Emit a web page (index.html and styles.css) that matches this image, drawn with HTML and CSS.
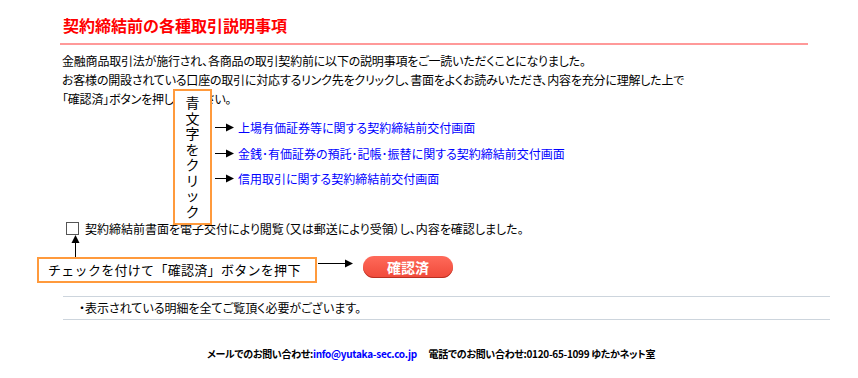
FILE: index.html
```html
<!DOCTYPE html>
<html lang="ja">
<head>
<meta charset="utf-8">
<title>契約締結前の各種取引説明事項</title>
<link rel="stylesheet" href="styles.css">
</head>
<body>
<div class="page">
  <div class="head">
    <h1 class="title">契約締結前の各種取引説明事項</h1>
  </div>

  <div class="content">
    <div class="note"><span class="note-text">青文字をクリック</span></div>
    <p class="intro">金融商品取引法が施行され、各商品の取引契約前に以下の説明事項をご一読いただくことになりました。<br>お客様の開設されている口座の取引に対応するリンク先をクリックし、書面をよくお読みいただき、内容を充分に理解した上で<br>「確認済」ボタンを押してください。</p>

    <ul class="links">
      <li><svg class="arr" width="19" height="9" viewBox="0 0 19 9"><line x1="0" y1="4.5" x2="12" y2="4.5" stroke="#000" stroke-width="1"/><polygon points="11,0.5 19,4.5 11,8.5" fill="#000"/></svg><a href="#">上場有価証券等に関する契約締結前交付画面</a></li>
      <li><svg class="arr" width="19" height="9" viewBox="0 0 19 9"><line x1="0" y1="4.5" x2="12" y2="4.5" stroke="#000" stroke-width="1"/><polygon points="11,0.5 19,4.5 11,8.5" fill="#000"/></svg><a href="#">金銭･有価証券の預託･記帳･振替に関する契約締結前交付画面</a></li>
      <li><svg class="arr" width="19" height="9" viewBox="0 0 19 9"><line x1="0" y1="4.5" x2="12" y2="4.5" stroke="#000" stroke-width="1"/><polygon points="11,0.5 19,4.5 11,8.5" fill="#000"/></svg><a href="#">信用取引に関する契約締結前交付画面</a></li>
    </ul>

    <label class="confirm"><span class="box"></span>契約締結前書面を電子交付により閲覧（又は郵送により受領）し、内容を確認しました。</label>

    <div class="action">
      <div class="instr">
        <svg class="uparr" width="9" height="22" viewBox="0 0 9 22"><line x1="4.5" y1="6" x2="4.5" y2="22" stroke="#000" stroke-width="1"/><polygon points="0.5,8 4.5,0 8.5,8" fill="#000"/></svg>
        チェックを付けて「確認済」ボタンを押下
      </div>
      <svg class="rarr" width="36" height="9" viewBox="0 0 36 9"><line x1="0" y1="4.5" x2="28" y2="4.5" stroke="#000" stroke-width="1"/><polygon points="27,0.5 35,4.5 27,8.5" fill="#000"/></svg>
      <button class="btn" type="button">確認済</button>
    </div>

    <div class="notice">・表示されている明細を全てご覧頂く必要がございます。</div>
  </div>

  <p class="footer">メールでのお問い合わせ:<a href="#">info@yutaka-sec.co.jp</a>　 電話でのお問い合わせ:0120-65-1099 ゆたかネット室</p>
</div>
</body>
</html>
```

FILE: styles.css
```css
html, body {
  margin: 0;
  padding: 0;
  background: #fff;
}
body {
  font-family: "Noto Sans CJK JP", "Noto Sans", sans-serif;
  color: #000;
  font-size: 12px;
  font-feature-settings: "palt";
}
.page {
  width: 858px;
  padding-top: 16px;
}
.head {
  margin-left: 60px;
  width: 748px;
  border-bottom: 2px solid #ff9999;
  padding-bottom: 9px;
}
.title {
  margin: 0 0 0 3px;
  font-size: 16px;
  line-height: 18px;
  font-weight: bold;
  color: #ff0000;
  font-feature-settings: normal;
}
.content {
  position: relative;
  padding-top: 6px;
}
.intro {
  margin: 0 0 0 62px;
  line-height: 19px;
  letter-spacing: -0.2px;
}
.note {
  position: absolute;
  left: 173px;
  top: 44px;
  width: 35px;
  height: 132px;
  border: 2px solid #ff9a3c;
  background: #fff;
  display: flex;
  align-items: center;
  justify-content: center;
}
.note-text {
  display: block;
  width: 15px;
  font-size: 14px;
  line-height: 15.5px;
  text-align: center;
  word-break: break-all;
  line-break: anywhere;
  font-feature-settings: normal;
}
.links {
  list-style: none;
  margin: 7px 0 0 215px;
  padding: 0;
}
.links li {
  display: flex;
  align-items: center;
  height: 25.5px;
}
.arr {
  margin-right: 4px;
  flex: none;
}
.links a {
  color: #0000ff;
  text-decoration: none;
}
.confirm {
  display: flex;
  align-items: center;
  margin: 27px 0 0 66px;
  height: 19px;
}
.box {
  width: 11px;
  height: 11px;
  border: 1px solid #555;
  background: #fff;
  margin-right: 6px;
  flex: none;
}
.action {
  display: flex;
  align-items: flex-start;
  margin: 19px 0 0 37px;
  height: 26px;
}
.instr {
  position: relative;
  width: 267px;
  height: 22px;
  border: 2px solid #ff9a3c;
  padding-left: 9px;
  font-size: 13px;
  line-height: 22px;
  letter-spacing: 0.3px;
  font-feature-settings: normal;
}
.uparr {
  position: absolute;
  left: 32px;
  top: -24px;
}
.rarr {
  margin: 2px 0 0 1px;
}
.btn {
  margin: -1px 0 0 9px;
  width: 90px;
  height: 22px;
  border: none;
  border-radius: 11px;
  background: linear-gradient(#ff6a5a, #f04a3a);
  box-shadow: inset 0 -1px 0 #b83022;
  color: #fff;
  font-family: inherit;
  font-weight: bold;
  font-size: 14px;
  line-height: 22px;
  padding: 0;
}
.notice {
  margin: 13px 0 0 63px;
  width: 767px;
  border-top: 1px solid #cdd5dd;
  border-bottom: 1px solid #cdd5dd;
  height: 24px;
  line-height: 22px;
  padding-left: 16px;
  box-sizing: border-box;
}
.footer {
  margin: 27px 0 0 207px;
  font-size: 10px;
  font-weight: bold;
  line-height: 14px;
  letter-spacing: -0.3px;
}
.footer a {
  color: #0000ff;
  text-decoration: none;
}
```
